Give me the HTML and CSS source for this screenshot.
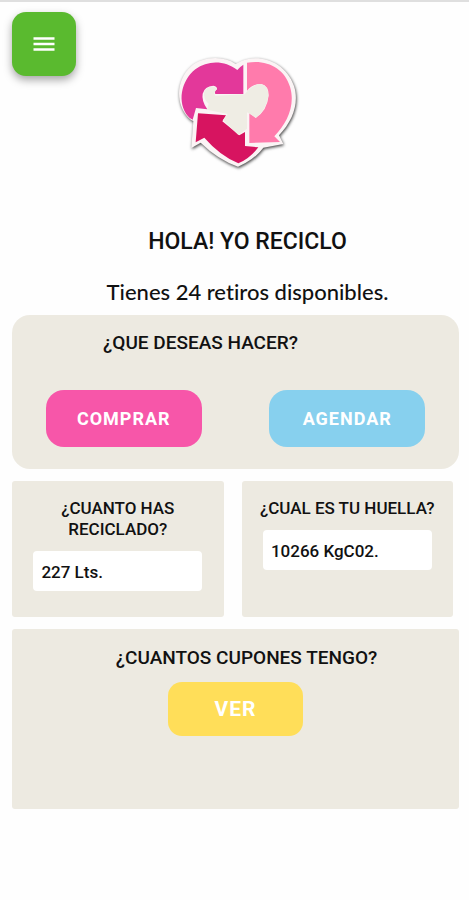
FILE: index.html
```html
<!DOCTYPE html>
<html lang="es">
<head>
<meta charset="utf-8">
<meta name="viewport" content="width=device-width, initial-scale=1">
<title>Yo Reciclo</title>
<link rel="stylesheet" href="styles.css">
</head>
<body>
<button class="menu" type="button" aria-label="Menú">
  <svg viewBox="0 0 24 18" width="24" height="18" aria-hidden="true"><path d="M1.500 3.500h21M1.500 9h21M1.500 14.500h21" stroke="#fff" stroke-width="2.400"/></svg>
</button>
<main class="page">
  <header class="hero">
    <svg class="logo" viewBox="0 0 420 390" role="img" aria-label="Yo Reciclo">
      <path class="logo-base" d="M203 54C165 28 105 30 68 62C24 102 22 173 60 214Q67 222 76 225L70 306L98 290Q149 340 210 362Q257 343 286 305L346 294L333 268C375 225 394 170 378 120C354 48 276 22 222 44Z"/>
      <path fill="#e3389a" d="M208 72C170 43 120 42 82 70C38 105 27 171 60 211Q66 219 74 221L84 186L118 190Q100 164 104 143Q110 120 136 119Q148 121 147 130Q138 136 142 144L226 144V56Q216 62 208 72Z"/>
      <path fill="#ff7bac" d="M237 50C296 39 350 67 366 122C383 178 357 232 319 271L336 288L244 291V201L263 216Q298 194 302 148Q302 119 280 114Q254 113 237 134Z"/>
      <path fill="#d71460" d="M90 202L174 208L163 226L214 268L231 258V300L271 304Q246 337 211 352Q155 328 109 275L83 289Z"/>
      <path fill="#efede4" d="M147 129Q139 119 124 123Q107 130 108 147Q110 164 122 173L117 191L179 204L165 222L211 267L237 248V199L264 215Q294 193 301 151Q302 119 278 114Q252 115 230 145L142 149Q135 139 147 129Z"/>
    </svg>
    <h1 class="title">HOLA! YO RECICLO</h1>
    <p class="subtitle">Tienes 24 retiros disponibles.</p>
  </header>

  <section class="card actions">
    <h2 class="heading actions-heading">¿QUE DESEAS HACER?</h2>
    <div class="action-row">
      <button class="btn pink" type="button">COMPRAR</button>
      <button class="btn blue" type="button">AGENDAR</button>
    </div>
  </section>

  <section class="stats">
    <div class="card stat">
      <label class="stat-label" for="reciclado">¿CUANTO HAS RECICLADO?</label>
      <input class="stat-value" id="reciclado" type="text" value="227 Lts." readonly>
    </div>
    <div class="card stat">
      <label class="stat-label" for="huella">¿CUAL ES TU HUELLA?</label>
      <input class="stat-value" id="huella" type="text" value="10266 KgC02." readonly>
    </div>
  </section>

  <section class="card coupons">
    <h2 class="heading coupons-heading">¿CUANTOS CUPONES TENGO?</h2>
    <button class="btn yellow" type="button">VER</button>
  </section>
</main>
</body>
</html>
```
FILE: styles.css
```css
* { box-sizing: border-box; }

body {
  margin: 0;
  border-top: 2px solid #dfdfdf;
  background: #fefefe;
  color: #111;
  font-family: Roboto, "Liberation Sans", sans-serif;
  font-weight: 500;
}

h1, h2, p { margin: 0; font-weight: 500; }

.menu {
  position: absolute;
  top: 12px;
  left: 12px;
  display: grid;
  place-items: center;
  width: 64px;
  height: 64px;
  padding: 0;
  border: 0;
  border-radius: 14px;
  background: #5aba2f;
  box-shadow: 0 4px 8px rgba(0, 0, 0, 0.35);
}

.page {
  display: flex;
  flex-direction: column;
  gap: 12px;
  padding: 44px 10px 24px 12px;
}

.hero {
  display: flex;
  flex-direction: column;
  align-items: center;
  margin-bottom: -5px;
  padding-left: 4px;
}

.logo { width: 140px; height: 130px; }

.logo-base {
  fill: #fbf4f5;
  filter: drop-shadow(2px 4px 5px rgba(0, 0, 0, 0.75));
}

.title {
  margin-top: 52px;
  padding-left: 20px;
  font-size: 23px;
  line-height: 28px;
}

.subtitle {
  margin-top: 20px;
  padding-left: 20px;
  font-family: Lato, "Open Sans", sans-serif;
  font-size: 22px;
  font-variant-ligatures: none;
  line-height: 32px;
}

.card {
  border-radius: 3px;
  background: #edeae1;
}

.heading {
  font-size: 19px;
  line-height: 24px;
  text-align: center;
}

.actions {
  padding: 16px 0 22px;
  border-radius: 18px;
}

.actions-heading { padding-right: 70px; }

.action-row {
  display: grid;
  grid-template-columns: 1fr 1fr;
  justify-items: center;
  margin-top: 35px;
}

.btn {
  width: 70%;
  height: 57px;
  padding: 0;
  border: 0;
  border-radius: 18px;
  color: #fff;
  font: 700 18px/24px Roboto, "Liberation Sans", sans-serif;
  letter-spacing: 1px;
}

.pink { background: #f756a9; }
.blue { background: #87d0ee; }

.stats {
  display: grid;
  grid-template-columns: 1fr 1fr;
  gap: 18px;
  padding-right: 6px;
}

.stat {
  display: flex;
  flex-direction: column;
  align-items: center;
  min-height: 136px;
  padding: 17px 16px;
}

.stat-label {
  font-size: 17px;
  line-height: 21px;
  text-align: center;
}

.stat-value {
  width: 94%;
  height: 40px;
  margin-top: 11px;
  padding: 2px 8px 0;
  border: 0;
  border-radius: 4px;
  background: #fff;
  color: #111;
  font: 500 17px/21px Roboto, "Liberation Sans", sans-serif;
}

.coupons {
  display: flex;
  flex-direction: column;
  align-items: center;
  min-height: 180px;
  padding: 17px 0;
}

.coupons-heading { padding-left: 22px; }

.yellow {
  width: 30%;
  height: 54px;
  margin-top: 12px;
  border-radius: 14px;
  background: #ffde59;
  font-size: 21px;
}
```
